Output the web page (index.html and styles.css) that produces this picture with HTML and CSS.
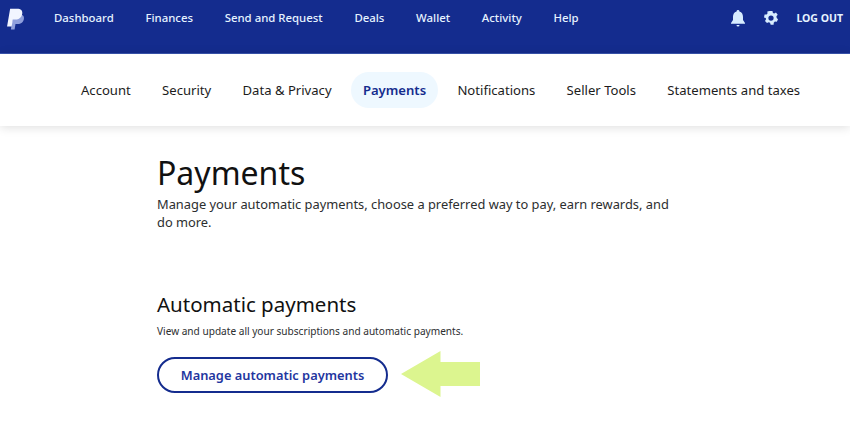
FILE: index.html
```html
<!DOCTYPE html>
<html lang="en">
<head>
<meta charset="utf-8">
<title>Payments</title>
<link rel="stylesheet" href="styles.css">
</head>
<body>
<header class="topbar">
  <svg class="logo" viewBox="0 0 24 30" width="19" height="23" aria-hidden="true">
    <path class="logo-back" d="M9 8h8c4 0 6.500 2 6 6-.6 4.500-4 7-8 7h-3l-1.200 7H6z"/>
    <path class="logo-front" d="M5 1h9c5 0 7.500 2.500 6.800 6.500C20 12.500 16.500 15 12 15H8.500L7 24H1z"/>
  </svg>
  <nav class="mainnav">
    <a>Dashboard</a><a>Finances</a><a>Send and Request</a><a>Deals</a><a>Wallet</a><a>Activity</a><a>Help</a>
  </nav>
  <div class="tools">
    <svg class="bell" viewBox="0 0 14 17" width="14" height="17" aria-hidden="true">
      <path d="M7 0a1.400 1.400 0 0 1 1.400 1.500C11 2.200 12 4.500 12 7v3l2 3v.8H0V13l2-3V7c0-2.500 1-4.800 3.600-5.500A1.400 1.400 0 0 1 7 0z"/>
      <path d="M5.500 15h3a1.500 1.500 0 0 1-3 0z"/>
    </svg>
    <svg class="gear" viewBox="0 0 24 24" width="14" height="14" aria-hidden="true">
      <path fill-rule="evenodd" d="M9.500 0h5l.8 3.300 2.200 1L20.500 2.600l3 4-2.200 2.600.5 2.800 2.200 2-2 4.600-3.300-.4-2 1.800-.2 3.400h-5l-1.200-3.200-2.200-1-3 1.500-3.400-3.600 1.800-2.800-.5-2.400L0 11.200l1-5 3.400-.2 1.600-1.900L5.700.9 9.500 0zM12 7.500a4.500 4.500 0 1 0 0 9 4.500 4.500 0 0 0 0-9z"/>
    </svg>
    <a class="logout">LOG OUT</a>
  </div>
</header>
<nav class="subnav">
  <a>Account</a><a>Security</a><a>Data &amp; Privacy</a><a class="active">Payments</a><a>Notifications</a><a>Seller Tools</a><a>Statements and taxes</a>
</nav>
<main class="content">
  <h1>Payments</h1>
  <p class="lead">Manage your automatic payments, choose a preferred way to pay, earn rewards, and do more.</p>
  <h2>Automatic payments</h2>
  <p class="note">View and update all your subscriptions and automatic payments.</p>
  <div class="action">
    <a class="button">Manage automatic payments</a>
    <svg class="arrow" viewBox="0 0 80 46" width="79" height="46" preserveAspectRatio="none" aria-hidden="true">
      <path d="M0 23 40 0v11h40v24H40v11z"/>
    </svg>
  </div>
</main>
</body>
</html>
```
FILE: styles.css
```css
* { box-sizing: border-box; }
html, body { margin: 0; height: 100%; }
body {
  background: #fff;
  color: #111;
  font-family: "Noto Sans", sans-serif;
  overflow: hidden;
}
.topbar {
  display: flex;
  align-items: flex-start;
  height: 54px;
  background: #142c8e;
  border-bottom: 1px solid #3a55b0;
  color: #e6f3ff;
  padding: 8px 7px 0 6px;
}
.logo { flex: none; margin-right: 29px; }
.logo-back { fill: #8f9fdc; }
.logo-front { fill: #f2f5ff; }
.mainnav {
  display: flex;
  gap: 31.700px;
  font-size: 11.400px;
  font-weight: 500;
  line-height: 20px;
}
.tools {
  display: flex;
  align-items: center;
  margin-left: auto;
  height: 20px;
}
.bell, .gear { fill: #d7ecff; flex: none; }
.bell { margin-right: 19px; }
.gear { margin-right: 18px; }
.logout { font-size: 10.500px; font-weight: 700; }
.subnav {
  display: flex;
  align-items: center;
  gap: 7.300px;
  height: 72px;
  padding-left: 69px;
  background: #fff;
  box-shadow: 0 1px 10px rgba(0, 0, 0, .14);
  font-size: 13.100px;
  color: #1c1c1c;
  white-space: nowrap;
}
.subnav a { padding: 9px 12px; line-height: 18px; border-radius: 18px; }
.subnav .active {
  color: #142c8e;
  font-weight: 600;
  background: #eef8ff;
}
.content { padding: 28px 0 0 157px; }
h1 {
  margin: 0;
  font-size: 32px;
  font-weight: 400;
  line-height: 38px;
}
.lead {
  margin: 3px 0 0;
  width: 525px;
  font-size: 12.850px;
  line-height: 18px;
  color: #2c2e2f;
}
h2 {
  margin: 59px 0 0;
  font-size: 20.500px;
  font-weight: 400;
  line-height: 28px;
}
.note {
  margin: 6px 0 0;
  font-size: 10.100px;
  line-height: 14px;
  color: #2c2e2f;
}
.action {
  position: relative;
  margin-top: 19px;
  width: 232px;
}
.button {
  display: flex;
  align-items: center;
  justify-content: center;
  width: 231px;
  height: 36px;
  border: 2px solid #142c8e;
  border-radius: 18px;
  color: #1f36a0;
  font-size: 12.850px;
  font-weight: 600;
}
.arrow {
  position: absolute;
  left: 244px;
  top: -6px;
  fill: #dcf58f;
}
```
